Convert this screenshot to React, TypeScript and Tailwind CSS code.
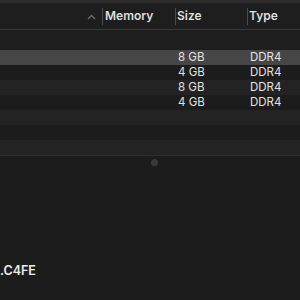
const rows = [
  { size: "8 GB", type: "DDR4", selected: true },
  { size: "4 GB", type: "DDR4" },
  { size: "8 GB", type: "DDR4" },
  { size: "4 GB", type: "DDR4" },
  { size: "", type: "" },
  { size: "", type: "" },
  { size: "", type: "" },
];

export default function App() {
  return (
    <div
      className="w-[300px] h-[300px] overflow-hidden bg-[#1e1e1e] flex flex-col"
      style={{ fontFamily: "Inter, 'Liberation Sans', sans-serif" }}
    >
      <div className="h-[3px] bg-[#2b2b2b]" />

      {/* column header */}
      <div className="h-[27px] flex items-center border-b border-[#383838] text-[12px] font-semibold text-[#dedede]">
        <div className="flex-1 flex justify-end pr-[6px]">
          <svg width="9" height="6" viewBox="0 0 9 6" className="mt-[1px]">
            <path d="M1 5 L4.5 1.5 L8 5" stroke="#6b6b6b" strokeWidth="1.3" fill="none" />
          </svg>
        </div>
        <div className="w-[73px] h-[17px] flex items-center border-l border-[#4a4a4a] pl-[2px]">
          Memory
        </div>
        <div className="w-[72px] h-[17px] flex items-center border-l border-[#4a4a4a] pl-[1px]">
          Size
        </div>
        <div className="w-[53px] h-[17px] flex items-center border-l border-[#4a4a4a] pl-[1px]">
          Type
        </div>
      </div>

      <div className="h-[20px]" />

      {rows.map((r, i) => (
        <div
          key={i}
          className={
            "h-[15px] flex items-center text-[11.5px] text-[#e2e2e2] " +
            (r.selected ? "bg-[#464646]" : i % 2 === 0 ? "bg-[#232323]" : "bg-[#1c1c1c]")
          }
        >
          <div className="w-[175px]" />
          <div className="w-[72px] pl-[3px]">{r.size}</div>
          <div className="flex-1 pl-[3px]">{r.type}</div>
        </div>
      ))}

      {/* lower pane */}
      <div className="flex-1 border-t border-[#2e2e2e] bg-[#1c1c1c] flex flex-col">
        <div className="flex justify-center pt-[3px]">
          <div className="w-[7px] h-[7px] rounded-full bg-[#3a3a3a] ml-[9px]" />
        </div>
        <div className="mt-[96px] text-[12.5px] font-semibold text-[#ececec]">
          .C4FE
        </div>
      </div>
    </div>
  );
}
